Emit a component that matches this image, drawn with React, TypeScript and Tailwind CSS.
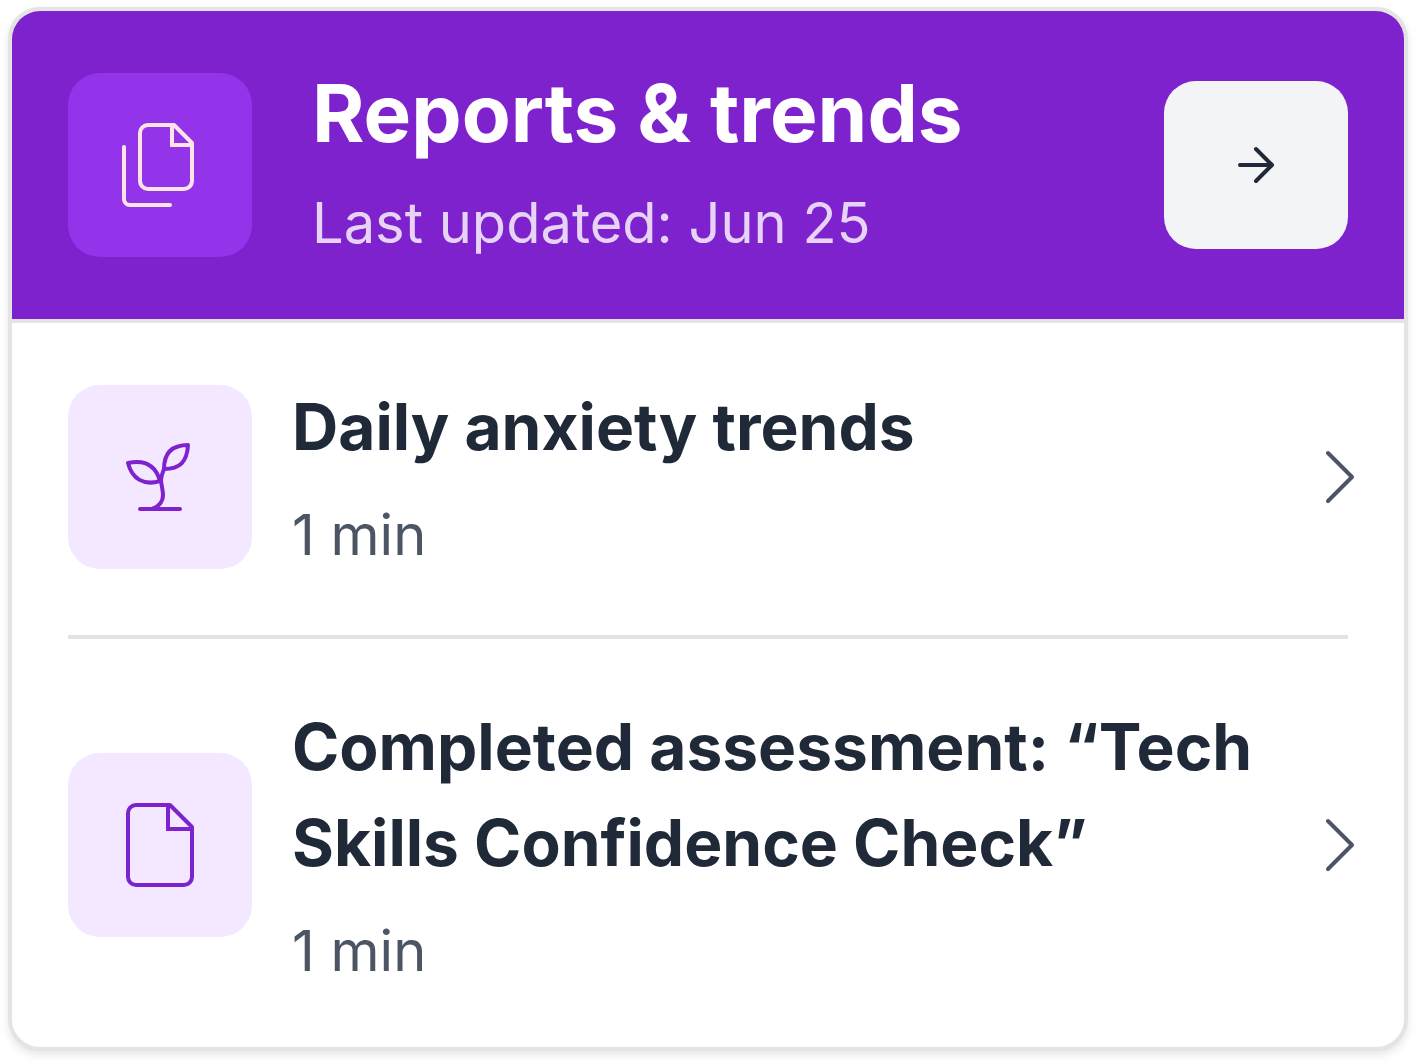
import type { ReactNode } from "react";

type IconProps = { className?: string };

const stroke = {
  fill: "none",
  stroke: "currentColor",
  strokeWidth: 4,
  strokeLinecap: "round",
  strokeLinejoin: "round",
  "aria-hidden": true,
} as const;

function DocumentsIcon({ className }: IconProps) {
  return (
    <svg viewBox="0 0 96 96" className={className} {...stroke}>
      <path d="M62 8H36a8 8 0 0 0-8 8v48a8 8 0 0 0 8 8h36a8 8 0 0 0 8-8V26Z" />
      <path d="M60 8v20h20" strokeLinejoin="miter" strokeLinecap="butt" />
      <path d="M12 30v52a6 6 0 0 0 6 6h40" />
    </svg>
  );
}

function DocumentIcon({ className }: IconProps) {
  return (
    <svg viewBox="0 0 96 96" className={className} {...stroke}>
      <path d="M58 8H24a8 8 0 0 0-8 8v64a8 8 0 0 0 8 8h48a8 8 0 0 0 8-8V30Z" />
      <path d="M56 8v24h24" strokeLinejoin="miter" strokeLinecap="butt" />
    </svg>
  );
}

function SproutIcon({ className }: IconProps) {
  return (
    <svg viewBox="0 0 96 96" className={className} {...stroke}>
      <path d="M16 34C30 31 43 34 48 52C32 57 20 50 16 34Z" />
      <path d="M52 40C52 24 60 16 76 16C75 33 68 40 52 40Z" />
      <path d="M52 40C50 45 49 48 49 52C50 59 51 62 51 66C51 73 46 78 40 80" />
      <path d="M28 80h40" />
    </svg>
  );
}

function ArrowRightIcon({ className }: IconProps) {
  return (
    <svg viewBox="0 0 48 48" className={className} {...stroke}>
      <path d="M8 24h32M24 8l16 16-16 16" />
    </svg>
  );
}

function ChevronRightIcon({ className }: IconProps) {
  return (
    <svg viewBox="0 0 80 80" className={className} {...stroke}>
      <path d="M28 16l24 24-24 24" />
    </svg>
  );
}

function IconTile({ className, children }: { className: string; children: ReactNode }) {
  return (
    <div className={`flex size-46 shrink-0 items-center justify-center rounded-[32px] ${className}`}>
      {children}
    </div>
  );
}

type Report = { title: string; duration: string; icon: ReactNode };

const reports: Report[] = [
  { title: "Daily anxiety trends", duration: "1 min", icon: <SproutIcon className="size-24" /> },
  {
    title: "Completed assessment: “Tech Skills Confidence Check”",
    duration: "1 min",
    icon: <DocumentIcon className="size-24" />,
  },
];

function ReportRow({ title, duration, icon }: Report) {
  return (
    <a href="#" className="flex items-center gap-10">
      <IconTile className="bg-purple-100 text-[#7e22ce]">{icon}</IconTile>
      <div className="flex min-w-0 flex-1 flex-col gap-5">
        <h3 className="text-[64px] leading-[96px] font-bold text-[#1f2937]">{title}</h3>
        <p className="text-[56px] leading-[80px] text-[#4b5563]">{duration}</p>
      </div>
      <ChevronRightIcon className="-mr-8 size-20 shrink-0 text-[#4b5563]" />
    </a>
  );
}

export default function App() {
  return (
    <main className="bg-white px-2 pt-[7px] pb-[10px] font-['Inter',sans-serif]">
      <section className="overflow-hidden rounded-[32px] border-4 border-[#e4e4e4] bg-white shadow-[0_4px_8px_rgba(0,0,0,0.1)]">
        <header className="flex items-center border-b-4 border-[#e4e4e4] bg-[#7e22ce] px-14 py-[54px]">
          <IconTile className="bg-[#9333ea] text-[#ffe4e6]">
            <DocumentsIcon className="size-24" />
          </IconTile>
          <div className="ml-15 flex min-w-0 flex-1 flex-col gap-5">
            <h2 className="text-[80px] leading-[96px] font-bold text-white">Reports &amp; trends</h2>
            <p className="text-[56px] leading-[84px] text-[#e6d3f5]">Last updated: Jun 25</p>
          </div>
          <button
            type="button"
            aria-label="Open reports"
            className="flex h-42 w-46 shrink-0 items-center justify-center rounded-[32px] bg-[#f3f4f6] text-[#1f2937]"
          >
            <ArrowRightIcon className="size-12" />
          </button>
        </header>
        <ul className="divide-y-4 divide-[#e4e4e4] px-14">
          {reports.map((report) => (
            <li key={report.title} className="py-15 first:pt-14 last:pb-14">
              <ReportRow {...report} />
            </li>
          ))}
        </ul>
      </section>
    </main>
  );
}
